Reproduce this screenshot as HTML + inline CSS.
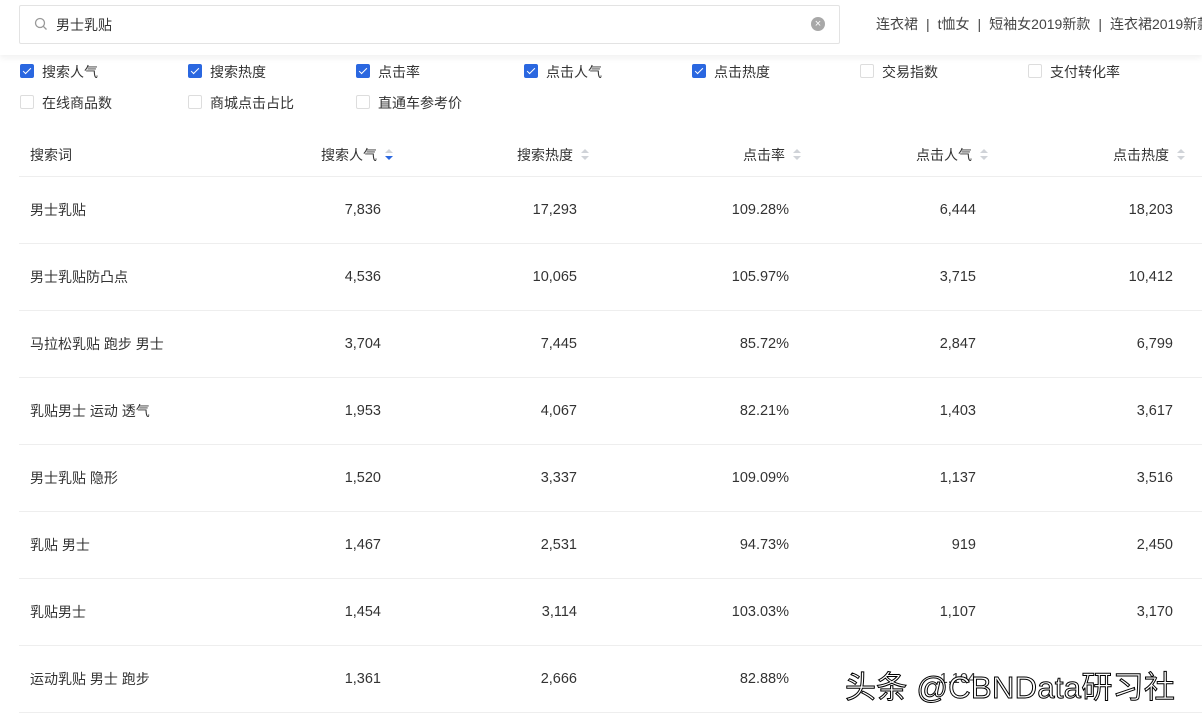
<!DOCTYPE html><html><head><meta charset="utf-8"><style>
body{margin:0;width:1202px;height:723px;overflow:hidden;background:#fff;font-family:"Liberation Sans","Noto Sans CJK SC",sans-serif;color:#333;position:relative}
.top{position:absolute;left:0;top:0;width:1202px;height:55px;background:#fff;box-shadow:0 3px 6px rgba(0,0,0,.06)}
.search{position:absolute;left:19px;top:5px;width:819px;height:37px;border:1px solid #e3e3e3;border-radius:2px}
.search .t{position:absolute;left:36px;top:9px;font-size:14px;color:#333}
.clr{position:absolute;left:791px;top:11px;width:14px;height:14px;border-radius:50%;background:#a8a8a8;color:#fff;font-size:11px;line-height:14px;text-align:center}
.hot{position:absolute;left:876px;top:14px;font-size:14px;color:#444;white-space:nowrap;font-family:"Liberation Sans","Noto Sans CJK SC",sans-serif}
.hot b{font-weight:normal;margin:0 8px}
.cb{position:absolute;font-size:14px;color:#333;white-space:nowrap}
.cb i{position:absolute;left:-22px;top:2px;width:12px;height:12px;border:1px solid #ddd;border-radius:2px;background:#fff}
.cb i.on{background:#2a67e0;border-color:#2a67e0}
.cb i.on:after{content:"";position:absolute;left:3.5px;top:0.5px;width:3px;height:7px;border:solid #fff;border-width:0 1.5px 1.5px 0;transform:rotate(45deg)}
.cell{position:absolute;font-size:14px;color:#333;white-space:nowrap}
.r{text-align:right;font-size:14.5px}
.line{position:absolute;left:19px;width:1183px;height:1px;background:#eee}
.s{display:inline-block;width:8px;height:12px;position:relative;margin-left:8px;vertical-align:-1px}
.s:before,.s:after{content:"";position:absolute;left:0;border-left:4px solid transparent;border-right:4px solid transparent}
.s:before{top:0;border-bottom:4px solid #d0d3d8}
.s:after{bottom:1px;border-top:4px solid #d0d3d8}
.s.d:after{border-top-color:#2a67e0}
.wm{position:absolute;left:845px;top:662px;font-size:31px;letter-spacing:0.3px;color:#fff;-webkit-text-stroke:1px #000;white-space:nowrap;font-family:"Liberation Sans","Noto Sans CJK SC",sans-serif}
</style></head><body>
<div class="top">
<div class="search"><svg style="position:absolute;left:14px;top:11px" width="14" height="14" viewBox="0 0 14 14"><circle cx="6" cy="6" r="4.5" fill="none" stroke="#999" stroke-width="1.3"/><path d="M9.3 9.3L12.5 12.5" stroke="#999" stroke-width="1.3"/></svg><span class="t">男士乳贴</span><span class="clr">×</span></div>
<div class="hot">连衣裙<b>|</b>t恤女<b>|</b>短袖女2019新款<b>|</b>连衣裙2019新款</div>
</div>
<div class="cb" style="left:42px;top:62px"><i class="on"></i>搜索人气</div>
<div class="cb" style="left:210px;top:62px"><i class="on"></i>搜索热度</div>
<div class="cb" style="left:378px;top:62px"><i class="on"></i>点击率</div>
<div class="cb" style="left:546px;top:62px"><i class="on"></i>点击人气</div>
<div class="cb" style="left:714px;top:62px"><i class="on"></i>点击热度</div>
<div class="cb" style="left:882px;top:62px"><i></i>交易指数</div>
<div class="cb" style="left:1050px;top:62px"><i></i>支付转化率</div>
<div class="cb" style="left:42px;top:93px"><i></i>在线商品数</div>
<div class="cb" style="left:210px;top:93px"><i></i>商城点击占比</div>
<div class="cb" style="left:378px;top:93px"><i></i>直通车参考价</div>
<div class="cell" style="left:30px;top:145px">搜索词</div>
<div class="cell" style="left:321px;top:145px">搜索人气<span class="s d"></span></div>
<div class="cell" style="left:517px;top:145px">搜索热度<span class="s"></span></div>
<div class="cell" style="left:743px;top:145px">点击率<span class="s"></span></div>
<div class="cell" style="left:916px;top:145px">点击人气<span class="s"></span></div>
<div class="cell" style="left:1113px;top:145px">点击热度<span class="s"></span></div>
<div class="line" style="top:176px"></div>
<div id="rows"></div>
<script>
var d=[["男士乳贴","7,836","17,293","109.28%","6,444","18,203"],["男士乳贴防凸点","4,536","10,065","105.97%","3,715","10,412"],["马拉松乳贴 跑步 男士","3,704","7,445","85.72%","2,847","6,799"],["乳贴男士 运动 透气","1,953","4,067","82.21%","1,403","3,617"],["男士乳贴 隐形","1,520","3,337","109.09%","1,137","3,516"],["乳贴 男士","1,467","2,531","94.73%","919","2,450"],["乳贴男士","1,454","3,114","103.03%","1,107","3,170"],["运动乳贴 男士 跑步","1,361","2,666","82.88%","1,104",""]];
var R=[381,577,789,976,1173],h="";
d.forEach(function(r,i){var y=200+i*67;h+='<div class="cell" style="left:30px;top:'+y+'px">'+r[0]+'</div>';
for(var j=1;j<6;j++)h+='<div class="cell r" style="right:'+(1202-R[j-1])+'px;top:'+(y+2)+'px">'+r[j]+'</div>';
h+='<div class="line" style="top:'+(243+i*67)+'px"></div>';});
document.getElementById("rows").innerHTML=h;
</script>
<div class="wm">头条 @CBNData研习社</div>
</body></html>
